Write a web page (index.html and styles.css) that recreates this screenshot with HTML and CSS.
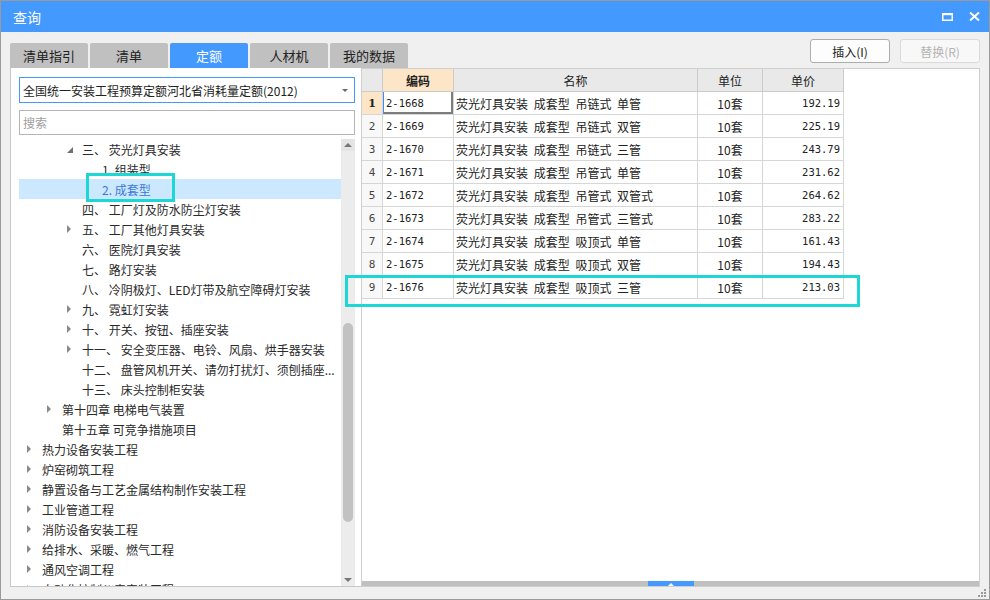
FILE: index.html
```html
<!DOCTYPE html>
<html lang="zh">
<head>
<meta charset="utf-8">
<title>查询</title>
<link rel="stylesheet" href="styles.css">
</head>
<body>
<div class="window">
  <div class="titlebar">
    <span class="title">查询</span>
    <div class="winbtns">
      <svg class="ico-max" width="11" height="8" viewBox="0 0 11 8"><rect x="0.75" y="1" width="9.5" height="6.25" fill="none" stroke="#fff" stroke-width="1.5"/><rect x="0" y="0" width="11" height="2.2" fill="#fff"/></svg>
      <svg class="ico-close" width="11" height="9" viewBox="0 0 11 9"><path d="M1 0.5 L10 8.5 M10 0.5 L1 8.5" stroke="#fff" stroke-width="2" fill="none"/></svg>
    </div>
  </div>

  <div class="toolbar">
    <div class="tabs">
      <div class="tab">清单指引</div>
      <div class="tab">清单</div>
      <div class="tab active">定额</div>
      <div class="tab">人材机</div>
      <div class="tab">我的数据</div>
    </div>
    <div class="actions">
      <button class="btn">插入(I)</button>
      <button class="btn disabled">替换(R)</button>
    </div>
  </div>

  <div class="main">
    <div class="left">
      <div class="select"><span>全国统一安装工程预算定额河北省消耗量定额(2012)</span><span class="caret"></span></div>
      <div class="search">搜索</div>
      <div class="treewrap">
        <div class="tree">
          <div class="row l2"><span class="exp open"></span><span class="txt">三、 荧光灯具安装</span></div>
          <div class="row l3"><span class="exp"></span><span class="txt">1. 组装型</span></div>
          <div class="row l3 sel"><span class="exp"></span><span class="txt">2. 成套型</span></div>
          <div class="row l2"><span class="exp"></span><span class="txt">四、 工厂灯及防水防尘灯安装</span></div>
          <div class="row l2"><span class="exp closed"></span><span class="txt">五、 工厂其他灯具安装</span></div>
          <div class="row l2"><span class="exp"></span><span class="txt">六、 医院灯具安装</span></div>
          <div class="row l2"><span class="exp"></span><span class="txt">七、 路灯安装</span></div>
          <div class="row l2"><span class="exp"></span><span class="txt">八、 冷阴极灯、LED灯带及航空障碍灯安装</span></div>
          <div class="row l2"><span class="exp closed"></span><span class="txt">九、 霓虹灯安装</span></div>
          <div class="row l2"><span class="exp closed"></span><span class="txt">十、 开关、按钮、插座安装</span></div>
          <div class="row l2"><span class="exp closed"></span><span class="txt">十一、 安全变压器、电铃、风扇、烘手器安装</span></div>
          <div class="row l2"><span class="exp"></span><span class="txt">十二、 盘管风机开关、请勿打扰灯、须刨插座...</span></div>
          <div class="row l2"><span class="exp"></span><span class="txt">十三、 床头控制柜安装</span></div>
          <div class="row l1"><span class="exp closed"></span><span class="txt">第十四章 电梯电气装置</span></div>
          <div class="row l1"><span class="exp"></span><span class="txt">第十五章 可竞争措施项目</span></div>
          <div class="row l0"><span class="exp closed"></span><span class="txt">热力设备安装工程</span></div>
          <div class="row l0"><span class="exp closed"></span><span class="txt">炉窑砌筑工程</span></div>
          <div class="row l0"><span class="exp closed"></span><span class="txt">静置设备与工艺金属结构制作安装工程</span></div>
          <div class="row l0"><span class="exp closed"></span><span class="txt">工业管道工程</span></div>
          <div class="row l0"><span class="exp closed"></span><span class="txt">消防设备安装工程</span></div>
          <div class="row l0"><span class="exp closed"></span><span class="txt">给排水、采暖、燃气工程</span></div>
          <div class="row l0"><span class="exp closed"></span><span class="txt">通风空调工程</span></div>
          <div class="row l0"><span class="exp closed"></span><span class="txt">自动化控制仪表安装工程</span></div>
        </div>
        <div class="vscroll">
          <div class="sarrow up"></div>
          <div class="track"><div class="thumb"></div></div>
          <div class="sarrow down"></div>
        </div>
      </div>
    </div>

    <div class="right">
      <div class="grid">
        <div class="cell hd"></div>
        <div class="cell hd hl">编码</div>
        <div class="cell hd c">名称</div>
        <div class="cell hd c">单位</div>
        <div class="cell hd c">单价</div>

        <div class="cell num cur">1</div><div class="cell code focus">2-1668</div><div class="cell name">荧光灯具安装 成套型 吊链式 单管</div><div class="cell unit">10套</div><div class="cell price">192.19</div>
        <div class="cell num">2</div><div class="cell code">2-1669</div><div class="cell name">荧光灯具安装 成套型 吊链式 双管</div><div class="cell unit">10套</div><div class="cell price">225.19</div>
        <div class="cell num">3</div><div class="cell code">2-1670</div><div class="cell name">荧光灯具安装 成套型 吊链式 三管</div><div class="cell unit">10套</div><div class="cell price">243.79</div>
        <div class="cell num">4</div><div class="cell code">2-1671</div><div class="cell name">荧光灯具安装 成套型 吊管式 单管</div><div class="cell unit">10套</div><div class="cell price">231.62</div>
        <div class="cell num">5</div><div class="cell code">2-1672</div><div class="cell name">荧光灯具安装 成套型 吊管式 双管式</div><div class="cell unit">10套</div><div class="cell price">264.62</div>
        <div class="cell num">6</div><div class="cell code">2-1673</div><div class="cell name">荧光灯具安装 成套型 吊管式 三管式</div><div class="cell unit">10套</div><div class="cell price">283.22</div>
        <div class="cell num">7</div><div class="cell code">2-1674</div><div class="cell name">荧光灯具安装 成套型 吸顶式 单管</div><div class="cell unit">10套</div><div class="cell price">161.43</div>
        <div class="cell num">8</div><div class="cell code">2-1675</div><div class="cell name">荧光灯具安装 成套型 吸顶式 双管</div><div class="cell unit">10套</div><div class="cell price">194.43</div>
        <div class="cell num">9</div><div class="cell code">2-1676</div><div class="cell name">荧光灯具安装 成套型 吸顶式 三管</div><div class="cell unit">10套</div><div class="cell price">213.03</div>
      </div>
      <div class="spacer"></div>
      <div class="hbar"><div class="handle"><span class="hup"></span></div></div>
    </div>
  </div>

  <div class="status">
    <svg class="grip" width="10" height="10" viewBox="0 0 10 10" fill="#9a9a9a">
      <rect x="7" y="1" width="2" height="2"/>
      <rect x="4" y="4" width="2" height="2"/><rect x="7" y="4" width="2" height="2"/>
      <rect x="1" y="7" width="2" height="2"/><rect x="4" y="7" width="2" height="2"/><rect x="7" y="7" width="2" height="2"/>
    </svg>
  </div>

  <div class="mark mark-tree"></div>
  <div class="mark mark-row"></div>
</div>
</body>
</html>
```

FILE: styles.css
```css
* { box-sizing: border-box; }

body {
  margin: 0;
  background: #ffffff;
  font-family: "Noto Sans CJK SC", "Noto Sans", sans-serif;
}

.window {
  position: relative;
  width: 990px;
  height: 600px;
  border: 1px solid #9a9a9a;
  background: #f0f0f0;
  display: flex;
  flex-direction: column;
  overflow: hidden;
}

/* title bar */
.titlebar {
  height: 31px;
  flex-shrink: 0;
  background: #4499ff;
  color: #fff;
  display: flex;
  align-items: center;
  justify-content: space-between;
  padding: 0 9px 0 12px;
  font-size: 14px;
}
.title { line-height: 1; margin-top: 1px; }
.winbtns { display: flex; align-items: center; gap: 16px; }
.ico-max { display: block; }
.ico-close { display: block; }

/* toolbar */
.toolbar {
  height: 36px;
  flex-shrink: 0;
  display: flex;
  justify-content: space-between;
  padding: 0 9px;
}
.tabs {
  display: flex;
  gap: 2px;
  align-self: flex-end;
}
.tab {
  width: 78px;
  height: 25px;
  background: #c0c0c0;
  border-radius: 2px 2px 0 0;
  display: flex;
  align-items: center;
  justify-content: center;
  font-size: 13px;
  color: #222;
}
.tab.active { background: #4499ff; color: #fff; }

.actions {
  display: flex;
  gap: 10px;
  margin-top: 7px;
}
.btn {
  width: 80px;
  height: 24px;
  border: 1px solid #adadad;
  border-radius: 3px;
  background: #fdfdfd;
  font-family: inherit;
  font-size: 12px;
  color: #222;
  padding: 0;
}
.btn.disabled {
  color: #b4b4b4;
  border-color: #dadada;
  background: #f8f8f8;
}

/* main */
.main {
  height: 519px;
  flex-shrink: 0;
  display: flex;
  margin: 0 9px;
  background: #fff;
}

.left {
  width: 351px;
  flex-shrink: 0;
  border-left: 1px solid #c8c8c8;
  border-bottom: 1px solid #c8c8c8;
  padding: 9px 6px 0 8px;
  display: flex;
  flex-direction: column;
}
.select {
  height: 26px;
  flex-shrink: 0;
  border: 1px solid #4499ff;
  display: flex;
  align-items: center;
  justify-content: space-between;
  padding: 0 6px 0 3px;
  font-size: 12px;
  color: #222;
}
.caret {
  width: 0;
  height: 0;
  border-left: 3px solid transparent;
  border-right: 3px solid transparent;
  border-top: 3px solid #6a6a6a;
}
.search {
  height: 25px;
  flex-shrink: 0;
  margin-top: 7px;
  border: 1px solid #b5b5b5;
  display: flex;
  align-items: center;
  padding: 0 3px;
  font-size: 12px;
  color: #a0a0a0;
}

.treewrap {
  flex: 1;
  min-height: 0;
  margin-top: 4px;
  display: flex;
}
.tree {
  flex: 1;
  min-width: 0;
  overflow: hidden;
}
.row {
  height: 20px;
  display: flex;
  align-items: center;
  font-size: 12px;
  color: #2a2a2a;
  white-space: nowrap;
  padding-left: 8px;
}
.row.l1 { padding-left: 28px; }
.row.l2 { padding-left: 48px; }
.row.l3 { padding-left: 68px; }
.row.sel { background: #cce8ff; color: #3a7ad8; }
.exp {
  width: 15px;
  height: 20px;
  flex-shrink: 0;
  display: flex;
  align-items: center;
}
.exp.closed::before {
  content: "";
  width: 0;
  height: 0;
  border-left: 4px solid #8a8a8a;
  border-top: 4px solid transparent;
  border-bottom: 4px solid transparent;
}
.exp.open::before {
  content: "";
  width: 0;
  height: 0;
  border-left: 6px solid transparent;
  border-bottom: 6px solid #707070;
  margin-top: 1px;
}

.vscroll {
  width: 14px;
  flex-shrink: 0;
  background: #ececec;
  display: flex;
  flex-direction: column;
  align-items: center;
}
.sarrow {
  height: 12px;
  width: 14px;
  flex-shrink: 0;
  display: flex;
  align-items: center;
  justify-content: center;
  background: #e4e4e4;
}
.sarrow.up::before {
  content: "";
  border-left: 4px solid transparent;
  border-right: 4px solid transparent;
  border-bottom: 4px solid #777;
}
.sarrow.down::before {
  content: "";
  border-left: 4px solid transparent;
  border-right: 4px solid transparent;
  border-top: 4px solid #777;
}
.sarrow.down { background: #ececec; }
.track {
  flex: 1;
  width: 14px;
  display: flex;
  justify-content: center;
}
.thumb {
  width: 10px;
  height: 199px;
  margin-top: 172px;
  border-radius: 5px;
  background: #c2c2c2;
}

/* right panel */
.right {
  flex: 1;
  min-width: 0;
  border: 1px solid #cfcfcf;
  display: flex;
  flex-direction: column;
  background: #fff;
}
.grid {
  display: grid;
  grid-template-columns: 21px 71px 244px 65px 81px;
  width: 482px;
}
.cell {
  height: 23px;
  border-right: 1px solid #d6d6d6;
  border-bottom: 1px solid #d6d6d6;
  display: flex;
  align-items: center;
  font-size: 12px;
  color: #222;
  white-space: nowrap;
  overflow: hidden;
}
.cell.hd {
  background: #e9e9e9;
  border-color: #cbcbcb;
  justify-content: center;
}
.cell.hd.hl {
  background: #fde6c8;
  font-weight: bold;
}
.cell.num {
  justify-content: center;
  background: #f8f8f8;
  font-family: "DejaVu Sans Mono", monospace;
  font-size: 11px;
  color: #444;
}
.cell.num.cur {
  background: #fde6c8;
  font-family: "DejaVu Serif", serif;
  font-weight: bold;
  color: #222;
}
.cell.code {
  padding-left: 3px;
  font-family: "DejaVu Sans Mono", monospace;
  font-size: 10.5px;
}
.cell.focus {
  box-shadow: inset 1px 0 0 #3d8ef0, inset -2px -2px 0 #7d7d7d;
}
.cell.name {
  padding-left: 2px;
  word-spacing: 3px;
}
.cell.unit { justify-content: center; }
.cell.price {
  justify-content: flex-end;
  padding-right: 3px;
  font-family: "DejaVu Sans Mono", monospace;
  font-size: 10.5px;
}

.spacer { flex: 1; }
.hbar {
  height: 5px;
  flex-shrink: 0;
  background: #c0c0c0;
  display: flex;
  justify-content: center;
}
.handle {
  width: 46px;
  height: 5px;
  background: #4499ff;
  display: flex;
  justify-content: center;
  align-items: flex-end;
}
.hup {
  width: 0;
  height: 0;
  border-left: 3px solid transparent;
  border-right: 3px solid transparent;
  border-bottom: 3px solid #fff;
  margin-bottom: 0;
}

/* status strip */
.status {
  flex: 1;
  display: flex;
  justify-content: flex-end;
  align-items: flex-end;
  padding: 0 2px 1px 0;
}
.grip { display: block; }

/* annotation highlights */
.mark {
  position: absolute;
  border: 3px solid #1fd6d6;
  pointer-events: none;
}
.mark-tree { left: 85px; top: 172px; width: 89px; height: 29px; }
.mark-row { left: 344px; top: 274px; width: 515px; height: 32px; }
```
